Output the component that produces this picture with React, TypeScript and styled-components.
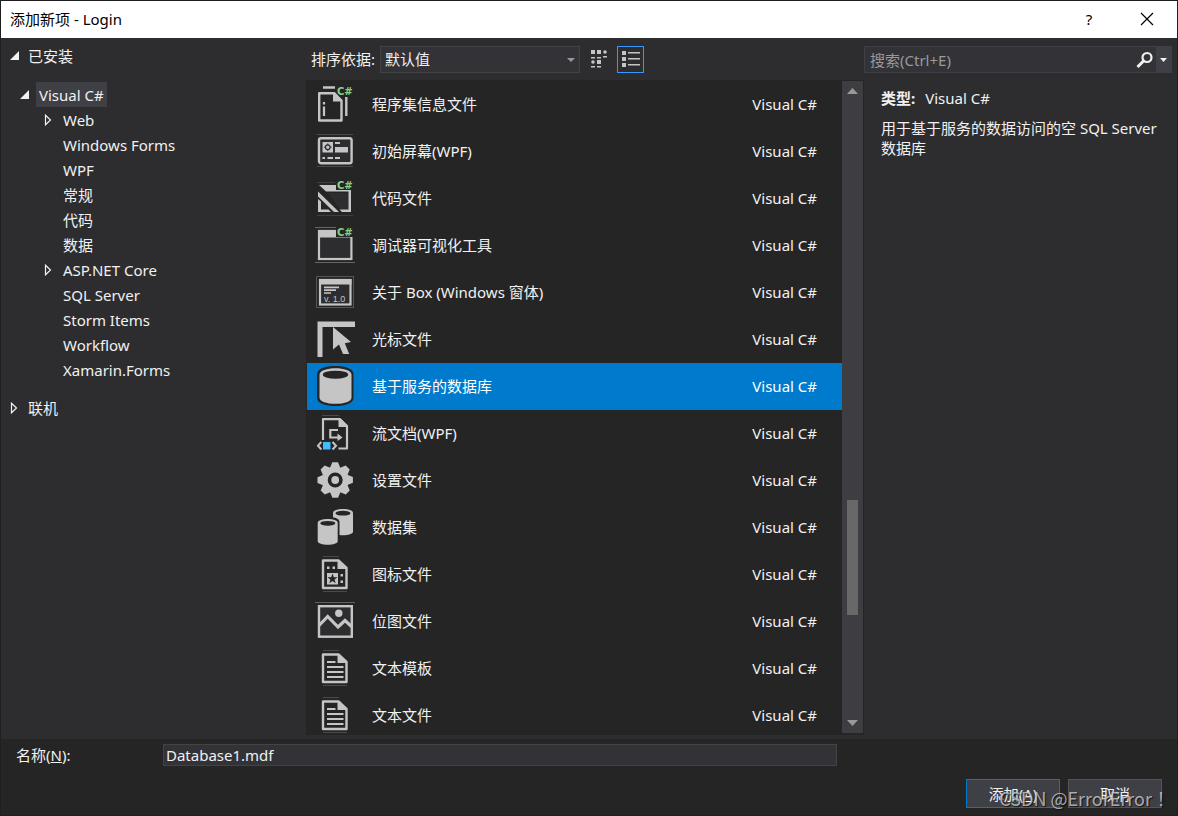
import React, { useState } from "react";
import styled, { createGlobalStyle, css } from "styled-components";

const ui = `"Noto Sans", "Noto Sans CJK SC", sans-serif`;

const color = {
  panel: "#2d2d30",
  list: "#252526",
  field: "#333337",
  edge: "#434346",
  raised: "#3f3f46",
  text: "#f1f1f1",
  glyph: "#c5c5c5",
  faint: "#4a4a4c",
  accent: "#007acc",
  focus: "#3399ff",
};

const GlobalStyle = createGlobalStyle`
  *, *::before, *::after { box-sizing: border-box; }
  body { margin: 0; background: ${color.list}; }
  button, input, select { font: inherit; color: inherit; margin: 0; }
`;

const Dialog = styled.div`
  position: relative;
  display: flex;
  flex-direction: column;
  height: 100vh;
  border: 1px solid #1f1f22;
  background: ${color.panel};
  color: ${color.text};
  font: 15px/20px ${ui};
  overflow: hidden;
`;

const TitleBar = styled.header`
  display: flex;
  align-items: center;
  flex: none;
  height: 37px;
  padding: 0 1px 2px 9px;
  background: #fff;
  color: #000;
`;

const Title = styled.h1`
  flex: 1;
  margin: 0;
  font-size: 15px;
  font-weight: 400;
`;

const CaptionButton = styled.button`
  display: flex;
  align-items: center;
  justify-content: center;
  width: 58px;
  height: 35px;
  padding: 0;
  border: 0;
  background: none;
`;

const Body = styled.main`
  display: grid;
  grid-template-columns: 305px minmax(0, 1fr) 313px;
  flex: 1;
  min-height: 0;
  padding-bottom: 4px;
`;

const Tree = styled.nav`
  padding-top: 5px;
`;

const TreeItem = styled.button<{ $level: number; $gap?: number }>`
  display: flex;
  align-items: center;
  width: 100%;
  height: 25px;
  margin-top: ${(p) => p.$gap ?? 0}px;
  padding: 0 0 0 ${(p) => [8, 18, 42][p.$level]}px;
  border: 0;
  background: none;
  text-align: left;
`;

const Twisty = styled.span<{ $root: boolean }>`
  display: flex;
  width: ${(p) => (p.$root ? 16 : 17)}px;
`;

const TreeLabel = styled.span<{ $selected?: boolean }>`
  padding: 3px 3px 2px;
  background: ${(p) => (p.$selected ? color.raised : "transparent")};
`;

const Center = styled.section`
  display: flex;
  flex-direction: column;
  min-height: 0;
`;

const Toolbar = styled.div`
  display: flex;
  align-items: center;
  flex: none;
  height: 42px;
  padding-left: 5px;
`;

const SortBox = styled.div`
  position: relative;
  width: 200px;
  margin: 0 5px;
`;

const SortSelect = styled.select`
  display: block;
  width: 100%;
  height: 27px;
  padding: 0 20px 0 4px;
  border: 1px solid ${color.edge};
  border-radius: 0;
  background: ${color.field};
  appearance: none;
`;

const SortArrow = styled.svg`
  position: absolute;
  right: 5px;
  top: 12px;
  pointer-events: none;
`;

const ViewButton = styled.button<{ $active?: boolean }>`
  display: flex;
  align-items: center;
  justify-content: center;
  width: 27px;
  height: 27px;
  margin-right: 5px;
  padding: 0;
  border: 1px solid ${(p) => (p.$active ? color.focus : "transparent")};
  background: none;
`;

const ListFrame = styled.div`
  display: flex;
  flex: 1;
  min-height: 0;
  padding: 1px 1px 2px;
  background: ${color.list};
`;

const List = styled.ul`
  flex: 1;
  margin: 0;
  padding: 0;
  overflow: hidden;
  list-style: none;
`;

const Row = styled.li<{ $selected: boolean }>`
  display: flex;
  align-items: center;
  height: 47px;
  padding: 0 25px 1px 8px;
  ${(p) =>
    p.$selected &&
    css`
      background: ${color.accent};
      color: #fff;
    `}
`;

const RowIcon = styled.svg`
  flex: none;
  width: 40px;
  height: 40px;
  overflow: visible;
`;

const RowName = styled.span`
  flex: 1;
  padding-left: 17px;
`;

const ScrollBar = styled.div`
  display: flex;
  flex-direction: column;
  align-items: center;
  width: 21px;
  background: #3e3e42;
`;

const ScrollButton = styled.button`
  display: flex;
  align-items: center;
  justify-content: center;
  flex: none;
  width: 21px;
  height: 20px;
  padding: 0;
  border: 0;
  background: none;
`;

const TrackSpace = styled.div<{ $share: number }>`
  flex: ${(p) => p.$share} 1 0;
`;

const Thumb = styled.div<{ $share: number }>`
  flex: ${(p) => p.$share} 1 0;
  width: 11px;
  background: #686868;
`;

const Details = styled.aside`
  padding-right: 5px;
`;

const SearchBox = styled.div`
  display: flex;
  height: 27px;
  margin-top: 8px;
  border: 1px solid ${color.raised};
  background: ${color.field};
`;

const SearchInput = styled.input`
  flex: 1;
  min-width: 0;
  padding: 0 5px;
  border: 0;
  background: none;
  outline: none;
  &::placeholder {
    color: #999;
    opacity: 1;
  }
`;

const SearchButton = styled.button<{ $menu?: boolean }>`
  display: flex;
  align-items: center;
  justify-content: center;
  width: ${(p) => (p.$menu ? 15 : 22)}px;
  padding: 0;
  border: 0;
  background: ${(p) => (p.$menu ? color.raised : "none")};
`;

const Description = styled.div`
  padding: 15px 5px 0 17px;
  p {
    margin: 0 0 10px;
  }
  b {
    margin-right: 10px;
  }
`;

const Footer = styled.footer`
  flex: none;
  padding: 5px 15px 7px;
  background: ${color.list};
`;

const NameRow = styled.div`
  display: flex;
  align-items: center;
  height: 22px;
  padding-right: 325px;
`;

const NameLabel = styled.label`
  width: 147px;
`;

const NameInput = styled.input`
  flex: 1;
  min-width: 0;
  height: 22px;
  padding: 0 2px;
  border: 1px solid ${color.edge};
  background: ${color.field};
  outline: none;
`;

const Actions = styled.div`
  display: flex;
  justify-content: flex-end;
  gap: 8px;
  margin-top: 13px;
`;

const ActionButton = styled.button<{ $primary?: boolean }>`
  width: 94px;
  height: 29px;
  padding: 0;
  border: 1px solid ${(p) => (p.$primary ? color.accent : "#555558")};
  background: ${color.raised};
`;

const Watermark = styled.div`
  position: absolute;
  right: 7px;
  bottom: 5px;
  color: rgba(205, 205, 205, 0.8);
  font: 18px/24px "Noto Sans CJK TC", sans-serif;
  text-shadow: 1px 1px 1px rgba(0, 0, 0, 0.7);
  white-space: nowrap;
  pointer-events: none;
`;

const Expanded = () => (
  <svg width="10" height="10" viewBox="0 0 10 10">
    <path d="M10 0V9H1Z" fill={color.text} />
  </svg>
);

const Collapsed = () => (
  <svg width="10" height="12" viewBox="0 0 10 12">
    <path d="M2.5 1.2V10.8L7.5 6Z" fill="none" stroke={color.text} strokeWidth="1.2" />
  </svg>
);

const Triangle = ({ up, fill = "#999" }: { up?: boolean; fill?: string }) => (
  <svg width="11" height="6" viewBox="0 0 11 6">
    <path d={up ? "M0 6L5.5 0L11 6Z" : "M0 0H11L5.5 6Z"} fill={fill} />
  </svg>
);

const CSharp = () => (
  <text x="22" y="11" fontFamily="DejaVu Sans" fontSize="10" fontWeight="700" fill="#89d185">
    C#
  </text>
);

const PageFold = () => (
  <>
    <path d="M8 6.5H23.5L31.5 14V34H8Z" fill="none" stroke={color.glyph} strokeWidth="2.4" strokeLinejoin="round" />
    <path d="M22.5 6H24L32 14V15H22.5Z" fill={color.glyph} />
    <path d="M8 2.5H24M8 37.5H32" stroke={color.faint} />
  </>
);

const g = color.glyph;
const dark = color.list;

const icons: Record<string, React.ReactNode> = {
  assembly: (
    <>
      <path d="M4.2 9.2H19L26.5 16.5V36.5H4.2Z" fill="none" stroke={g} strokeWidth="2.4" strokeLinejoin="round" />
      <path d="M18 8.5H20L27 16V17.5H18Z" fill={g} />
      <path d="M8 3.5H20M31.3 13V32" stroke={g} strokeWidth="2.4" fill="none" />
      <path d="M9 18V20.5M9 22.5V32" stroke={g} strokeWidth="2.2" />
      <CSharp />
    </>
  ),
  splash: (
    <>
      <path d="M2 3.5H38M2 35.5H38" stroke={color.faint} />
      <rect x="4" y="7.3" width="32.6" height="25" rx="2" fill={color.panel} stroke={g} strokeWidth="2.4" />
      <path d="M7.5 11H18V21.5H7.5ZM20 11H25V13H20ZM20 16H33V21.5H20ZM7.5 26H10V28H7.5ZM12.5 26H18V28H12.5ZM20 26H25V28H20Z" fill={g} />
      <path d="M12.8 12.5V20M9 16.2H16.6" stroke={color.panel} />
      <circle cx="12.8" cy="16.2" r="2.3" fill={g} stroke={color.panel} strokeWidth="1.2" />
    </>
  ),
  code: (
    <>
      <path d="M2 4.5H20M2 37.5H38" stroke={color.faint} strokeWidth="0.7" />
      <path d="M4 7H36V34H27L24.5 31.5H33.5V13.5H11Z" fill={g} />
      <path d="M13 15H33V31H25Z" fill={color.panel} />
      <path d="M3 13.5L24 34H19L3 18.5Z" fill={g} />
      <path d="M3 21L6 23.5V31.5H13.5L16 34H3Z" fill={g} />
      <rect x="21" y="1" width="17" height="11" fill={dark} />
      <CSharp />
    </>
  ),
  window: (
    <>
      <path d="M0 2.5H22M0 37.5H40" stroke="#777" strokeWidth="0.8" />
      <rect x="4" y="6" width="32.4" height="28" fill={color.panel} stroke={g} strokeWidth="2.2" />
      <path d="M3 5H37V12.5H3Z" fill={g} />
      <rect x="21" y="1" width="17" height="11" fill={dark} />
      <CSharp />
    </>
  ),
  about: (
    <>
      <rect x="1.5" y="4.5" width="37" height="31" fill="none" stroke="#555557" />
      <rect x="5" y="8" width="30.5" height="24.5" fill={color.panel} stroke={g} strokeWidth="2.2" />
      <path d="M4 7H36.5V12.5H4Z" fill={g} />
      <path d="M9 15.3H24M9 18.2H21M9 21H16" stroke={g} strokeWidth="1.7" />
      <text x="9" y="30" fontFamily="Liberation Sans" fontSize="9" fill={g}>
        v. 1.0
      </text>
    </>
  ),
  cursor: (
    <>
      <path d="M2.5 2.5H40V8H7.5V38H2.5Z" fill={g} />
      <path d="M18 8L36 23L29.8 24.3L34.2 35H28L24 25.5L18 30.5Z" fill={g} />
    </>
  ),
  database: (
    <>
      <path d="M2 8C2 2.5 11 0 20.3 0S38.5 2.5 38.5 8V32C38.5 37.5 29.5 40 20.3 40S2 37.5 2 32Z" fill={dark} />
      <path d="M4.5 8.7C4.5 4.5 12 2.3 20.5 2.3S36.5 4.5 36.5 8.7V31.5C36.5 35.5 29.5 37.8 20.5 37.8S4.5 35.5 4.5 31.5Z" fill={g} />
      <ellipse cx="20.5" cy="8.7" rx="12.7" ry="4" fill={dark} />
    </>
  ),
  flow: (
    <>
      <path d="M7 2.5H24" stroke={color.faint} />
      <path d="M8 27V6.2H25L32 13V35.5H23.5" fill="none" stroke={g} strokeWidth="2.2" strokeLinejoin="round" />
      <path d="M23.5 5.5H25.5L33 13V14H23.5Z" fill={g} />
      <path d="M23 17H15.3V24.5H24" fill="none" stroke={g} strokeWidth="2.2" />
      <path d="M22.5 20.5L27.5 24.5L22.5 28Z" fill={g} />
      <path d="M6.3 29L3 32.7L6.3 36.5M17.5 29L21 32.7L17.5 36.5" fill="none" stroke={g} strokeWidth="2" />
      <rect x="8" y="29" width="7.5" height="7.5" fill="#3fbdff" />
    </>
  ),
  gear: (
    <>
      {[0, 45, 90, 135, 180, 225, 270, 315].map((angle) => (
        <path key={angle} d="M14.5 9L17.3 2.3H23L25.8 9Z" transform={`rotate(${angle} 20.2 20)`} fill={g} />
      ))}
      <circle cx="20.2" cy="20" r="13.2" fill={g} />
      <circle cx="20.2" cy="20" r="5.7" fill={g} stroke={dark} strokeWidth="3.6" />
    </>
  ),
  dataset: (
    <>
      <path d="M18 6C18 3 23 2 28 2S38 3 38 6V24.5C38 27 33 28.3 28 28.3S18 27 18 24.5Z" fill={g} />
      <ellipse cx="28" cy="6.2" rx="7.5" ry="2.4" fill={dark} />
      <path d="M1.5 15C1.5 11 7 10 12.8 10S24.5 11 24.5 15V38H1.5Z" fill={dark} />
      <path d="M2.7 16C2.7 13 8 12 12.8 12S22.7 13 22.7 16V34C22.7 36.5 18 37.8 12.8 37.8S2.7 36.5 2.7 34Z" fill={g} />
      <ellipse cx="12.8" cy="16.3" rx="7.5" ry="2.4" fill={dark} />
    </>
  ),
  iconFile: (
    <>
      <PageFold />
      <path d="M12 12.5H14.5V15H12ZM17.5 12.5H20V15H17.5ZM12 19H23V30.5H12ZM25.5 20H28V22.5H25.5ZM25.5 26.5H28V29H25.5Z" fill={g} />
      <path d="M17.5 19.5L18.8 23.2H22.6L19.6 25.5L20.7 29.2L17.5 27L14.3 29.2L15.4 25.5L12.4 23.2H16.2Z" fill={dark} />
    </>
  ),
  bitmap: (
    <>
      <path d="M0 1.5H40" stroke="#666" strokeWidth="0.9" />
      <rect x="4" y="5.2" width="32.8" height="30.5" fill={color.panel} stroke={g} strokeWidth="2.4" />
      <path d="M4 24.5L12.7 15.5L23 26L30 19.5L36.5 25.5" fill="none" stroke={g} strokeWidth="3.2" />
      <circle cx="23.8" cy="12.2" r="3.7" fill={g} />
    </>
  ),
  text: (
    <>
      <PageFold />
      <path d="M12 14H20.5M12 19H28.5M12 24H28.5M12 29H28.5" stroke={g} strokeWidth="2.2" />
    </>
  ),
};

const tree = [
  { label: "已安装", level: 0, open: true },
  { label: "Visual C#", level: 1, open: true, gap: 14, selected: true },
  { label: "Web", level: 2, open: false },
  { label: "Windows Forms", level: 2 },
  { label: "WPF", level: 2 },
  { label: "常规", level: 2 },
  { label: "代码", level: 2 },
  { label: "数据", level: 2 },
  { label: "ASP.NET Core", level: 2, open: false },
  { label: "SQL Server", level: 2 },
  { label: "Storm Items", level: 2 },
  { label: "Workflow", level: 2 },
  { label: "Xamarin.Forms", level: 2 },
  { label: "联机", level: 0, open: false, gap: 13 },
];

const templates = [
  ["assembly", "程序集信息文件"],
  ["splash", "初始屏幕(WPF)"],
  ["code", "代码文件"],
  ["window", "调试器可视化工具"],
  ["about", "关于 Box (Windows 窗体)"],
  ["cursor", "光标文件"],
  ["database", "基于服务的数据库"],
  ["flow", "流文档(WPF)"],
  ["gear", "设置文件"],
  ["dataset", "数据集"],
  ["iconFile", "图标文件"],
  ["bitmap", "位图文件"],
  ["text", "文本模板"],
  ["text", "文本文件"],
];

export default function App() {
  const [selected, setSelected] = useState(6);
  return (
    <Dialog>
      <GlobalStyle />
      <TitleBar>
        <Title>添加新项 - Login</Title>
        <CaptionButton aria-label="帮助">?</CaptionButton>
        <CaptionButton aria-label="关闭">
          <svg width="14" height="14" viewBox="0 0 14 14">
            <path d="M1 1L13 13M13 1L1 13" stroke="#000" strokeWidth="1.2" />
          </svg>
        </CaptionButton>
      </TitleBar>
      <Body>
        <Tree>
          {tree.map((node) => (
            <TreeItem key={node.label} $level={node.level} $gap={node.gap}>
              <Twisty $root={node.level === 0}>{node.open === undefined ? null : node.open ? <Expanded /> : <Collapsed />}</Twisty>
              <TreeLabel $selected={node.selected}>{node.label}</TreeLabel>
            </TreeItem>
          ))}
        </Tree>
        <Center>
          <Toolbar>
            <label htmlFor="sort">排序依据:</label>
            <SortBox>
              <SortSelect id="sort" defaultValue="default">
                <option value="default">默认值</option>
              </SortSelect>
              <SortArrow width="8" height="4" viewBox="0 0 8 4">
                <path d="M0 0H8L4 4Z" fill="#999" />
              </SortArrow>
            </SortBox>
            <ViewButton aria-label="小图标">
              <svg width="18" height="18" viewBox="0 0 18 18" fill={g}>
                <path d="M1 0H5V4H1ZM7 0H11V4H7ZM1 7H5V8.5H1ZM7 7H11V8.5H7ZM13 6H17V7.5H13ZM7 10H11V14H7ZM1 16H5V17.5H1ZM7 16H11V17.5H7Z" />
                <circle cx="15" cy="2" r="1.8" />
                <circle cx="3" cy="12" r="1.8" />
              </svg>
            </ViewButton>
            <ViewButton $active aria-label="列表">
              <svg width="18" height="18" viewBox="0 0 18 18" fill={g}>
                <path d="M0 1H4V5H0ZM0 7H4V11H0ZM0 13H4V17H0ZM6 2H18V3.5H6ZM6 8H18V9.5H6ZM6 14H18V15.5H6Z" />
              </svg>
            </ViewButton>
          </Toolbar>
          <ListFrame>
            <List role="listbox" aria-label="模板">
              {templates.map(([icon, name], i) => (
                <Row key={name} role="option" aria-selected={i === selected} $selected={i === selected} onClick={() => setSelected(i)}>
                  <RowIcon viewBox="0 0 40 40">{icons[icon]}</RowIcon>
                  <RowName>{name}</RowName>
                  <span>Visual C#</span>
                </Row>
              ))}
            </List>
            <ScrollBar>
              <ScrollButton aria-label="向上滚动">
                <Triangle up />
              </ScrollButton>
              <TrackSpace $share={399} />
              <Thumb $share={115} />
              <TrackSpace $share={98} />
              <ScrollButton aria-label="向下滚动">
                <Triangle />
              </ScrollButton>
            </ScrollBar>
          </ListFrame>
        </Center>
        <Details>
          <SearchBox>
            <SearchInput type="text" aria-label="搜索" placeholder="搜索(Ctrl+E)" />
            <SearchButton aria-label="搜索">
              <svg width="18" height="18" viewBox="0 0 18 18" fill="none" stroke={color.text}>
                <circle cx="11" cy="6.5" r="4.5" strokeWidth="2.2" />
                <path d="M8 9.5L1.5 16" strokeWidth="3" />
              </svg>
            </SearchButton>
            <SearchButton $menu aria-label="搜索选项">
              <svg width="7" height="4" viewBox="0 0 7 4">
                <path d="M0 0H7L3.5 4Z" fill={color.text} />
              </svg>
            </SearchButton>
          </SearchBox>
          <Description>
            <p>
              <b>类型:</b>Visual C#
            </p>
            <p>用于基于服务的数据访问的空 SQL Server 数据库</p>
          </Description>
        </Details>
      </Body>
      <Footer>
        <NameRow>
          <NameLabel htmlFor="name">
            名称(<u>N</u>):
          </NameLabel>
          <NameInput id="name" type="text" defaultValue="Database1.mdf" />
        </NameRow>
        <Actions>
          <ActionButton $primary>
            添加(<u>A</u>)
          </ActionButton>
          <ActionButton>取消</ActionButton>
        </Actions>
      </Footer>
      <Watermark>CSDN @ErrorError！</Watermark>
    </Dialog>
  );
}
